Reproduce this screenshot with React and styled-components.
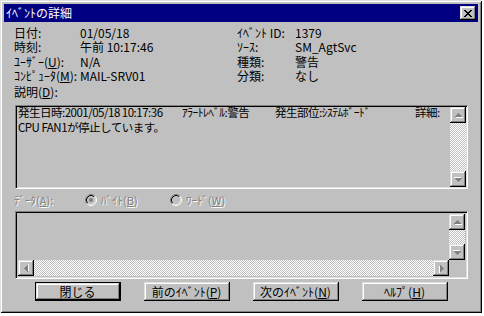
import React from 'react';
import styled, { createGlobalStyle, css } from 'styled-components';

const GlobalStyle = createGlobalStyle`
  body {
    margin: 0;
    background: #ffffff;
    font-family: "Noto Sans CJK JP", "Liberation Sans", sans-serif;
    font-size: 12px;
    color: #000;
  }
`;

const raised = css`
  background: #c0c0c0;
  box-shadow: inset -1px -1px #000, inset 1px 1px #dfdfdf, inset -2px -2px #808080,
    inset 2px 2px #fff;
`;

const sunken = css`
  box-sizing: border-box;
  border: 1px solid;
  border-color: #808080 #fff #fff #808080;
  box-shadow: inset 1px 1px #000, inset -1px -1px #dfdfdf;
`;

const Window = styled.div`
  box-sizing: border-box;
  width: 482px;
  padding: 4px;
  background: #c0c0c0;
  box-shadow: inset 1px 1px #dfdfdf, inset -1px -1px #000, inset 2px 2px #fff,
    inset -2px -2px #808080;
`;

const TitleBar = styled.div`
  height: 18px;
  background: #000080;
  display: flex;
  align-items: center;
  justify-content: space-between;
  padding: 0 2px;
`;

const TitleText = styled.span`
  color: #fff;
  font-size: 12px;
  line-height: 18px;
  white-space: nowrap;
`;

const CloseButton = styled.div`
  ${raised};
  width: 16px;
  height: 14px;
  display: flex;
  align-items: center;
  justify-content: center;
`;

const Body = styled.div`
  padding: 4px 10px 8px 10px;
  display: flex;
  flex-direction: column;
`;

const InfoGrid = styled.div`
  display: grid;
  grid-template-columns: 66px 157px 58px 1fr;
  line-height: 14.3px;
  white-space: nowrap;
`;

const U = styled.span`
  text-decoration: underline;
`;

const SectionLabel = styled.div`
  margin-top: 1px;
  line-height: 16px;
`;

const DescBox = styled.div`
  ${sunken};
  margin: 5px 0 0 1px;
  height: 84px;
  display: flex;
  padding: 1px;
  background: #c0c0c0;
`;

const DescText = styled.div`
  flex: 1;
  margin-top: -2px;
  padding-left: 1px;
  font-size: 11.5px;
  letter-spacing: -0.5px;
  line-height: 14.6px;
  overflow: hidden;
`;

const Line = styled.div`
  display: flex;
  white-space: nowrap;
`;

const Seg = styled.span`
  flex: none;
  width: ${({ $w }) => ($w ? `${$w}px` : 'auto')};
`;

const VScroll = styled.div`
  width: 16px;
  display: flex;
  flex-direction: column;
`;

const HScroll = styled.div`
  display: flex;
  height: 16px;
`;

const ArrowButton = styled.div`
  ${raised};
  flex: none;
  width: 16px;
  height: 16px;
  display: flex;
  align-items: center;
  justify-content: center;
`;

const Track = styled.div`
  flex: 1;
  background-color: #c0c0c0;
  background-image: conic-gradient(#fff 25%, #c0c0c0 0 50%, #fff 0 75%, #c0c0c0 0);
  background-size: 2px 2px;
`;

const DataRow = styled.div`
  margin-top: 4px;
  height: 14px;
  display: flex;
  align-items: center;
  white-space: nowrap;
  font-size: 11px;
  color: #808080;
  text-shadow: 1px 1px 0 #fff;
`;

const DataLabel = styled.span`
  width: 71px;
`;

const Radio = styled.label`
  display: inline-flex;
  align-items: center;
  gap: 4px;
  width: ${({ $w }) => $w}px;
`;

const DataBox = styled.div`
  ${sunken};
  margin: 4px 0 0 1px;
  height: 68px;
  padding: 2px;
  display: grid;
  grid-template-columns: 1fr 16px;
  grid-template-rows: 1fr 16px;
  background: #c0c0c0;
`;

const Corner = styled.div`
  background: #c0c0c0;
`;

const ButtonRow = styled.div`
  margin-top: 3px;
  display: flex;
  justify-content: center;
  gap: 23px;
`;

const Button = styled.div`
  ${raised};
  box-sizing: border-box;
  width: 86px;
  height: 19px;
  display: flex;
  align-items: center;
  justify-content: center;
  font-size: 12px;
  white-space: nowrap;
  ${({ $default }) =>
    $default &&
    css`
      border: 1px solid #000;
    `}
`;

const CloseGlyph = () => (
  <svg width="8" height="7" viewBox="0 0 8 7" shapeRendering="crispEdges">
    <path
      fill="#000"
      d="M0 0h2v1H0zM6 0h2v1H6zM1 1h2v1H1zM5 1h2v1H5zM2 2h4v1H2zM3 3h2v1H3zM2 4h4v1H2zM1 5h2v1H1zM5 5h2v1H5zM0 6h2v1H0zM6 6h2v1H6z"
    />
  </svg>
);

const rotations = { up: 0, right: 90, down: 180, left: 270 };

const Arrow = ({ dir }) => (
  <svg
    width="9"
    height="9"
    viewBox="0 0 9 9"
    shapeRendering="crispEdges"
    style={{ transform: `rotate(${rotations[dir]}deg)` }}
  >
    <path fill="#fff" d="M5 3h1v1H5zM4 4h3v1H4zM3 5h5v1H3zM2 6h7v1H2z" />
    <path fill="#808080" d="M4 2h1v1H4zM3 3h3v1H3zM2 4h5v1H2zM1 5h7v1H1z" />
  </svg>
);

const RadioIcon = ({ checked }) => (
  <svg width="12" height="12" viewBox="0 0 12 12">
    <circle cx="6" cy="6" r="4.2" fill="#c0c0c0" />
    <path d="M9.89 2.11A5.5 5.5 0 0 0 2.11 9.89" stroke="#808080" fill="none" />
    <path d="M9.89 2.11A5.5 5.5 0 0 1 2.11 9.89" stroke="#fff" fill="none" />
    <path d="M9.18 2.82A4.5 4.5 0 0 0 2.82 9.18" stroke="#000" fill="none" />
    <path d="M9.18 2.82A4.5 4.5 0 0 1 2.82 9.18" stroke="#dfdfdf" fill="none" />
    {checked && <circle cx="6" cy="6" r="2" fill="#808080" />}
  </svg>
);

const VerticalBar = () => (
  <VScroll>
    <ArrowButton>
      <Arrow dir="up" />
    </ArrowButton>
    <Track />
    <ArrowButton>
      <Arrow dir="down" />
    </ArrowButton>
  </VScroll>
);

const info = [
  ['日付:', '01/05/18', 'ｲﾍﾞﾝﾄ ID:', '1379'],
  ['時刻:', '午前 10:17:46', 'ｿｰｽ:', 'SM_AgtSvc'],
  [
    <>
      ﾕｰｻﾞｰ(<U>U</U>):
    </>,
    'N/A',
    '種類:',
    '警告',
  ],
  [
    <>
      ｺﾝﾋﾟｭｰﾀ(<U>M</U>):
    </>,
    'MAIL-SRV01',
    '分類:',
    'なし',
  ],
];

const App = () => (
  <>
    <GlobalStyle />
    <Window>
      <TitleBar>
        <TitleText>ｲﾍﾞﾝﾄの詳細</TitleText>
        <CloseButton>
          <CloseGlyph />
        </CloseButton>
      </TitleBar>
      <Body>
        <InfoGrid>
          {info.map((row, i) => row.map((cell, j) => <span key={`${i}-${j}`}>{cell}</span>))}
        </InfoGrid>
        <SectionLabel>
          説明(<U>D</U>):
        </SectionLabel>
        <DescBox>
          <DescText>
            <Line>
              <Seg $w={164}>発生日時:2001/05/18 10:17:36</Seg>
              <Seg $w={93}>ｱﾗｰﾄﾚﾍﾞﾙ:警告</Seg>
              <Seg $w={140}>発生部位:ｼｽﾃﾑﾎﾞｰﾄﾞ</Seg>
              <Seg>詳細:</Seg>
            </Line>
            <Line>CPU FAN1が停止しています。</Line>
          </DescText>
          <VerticalBar />
        </DescBox>
        <DataRow>
          <DataLabel>
            ﾃﾞｰﾀ(<U>A</U>):
          </DataLabel>
          <Radio $w={85}>
            <RadioIcon checked />
            <span>
              ﾊﾞｲﾄ(<U>B</U>)
            </span>
          </Radio>
          <Radio $w={85}>
            <RadioIcon />
            <span>
              ﾜｰﾄﾞ(<U>W</U>)
            </span>
          </Radio>
        </DataRow>
        <DataBox>
          <div />
          <VerticalBar />
          <HScroll>
            <ArrowButton>
              <Arrow dir="left" />
            </ArrowButton>
            <Track />
            <ArrowButton>
              <Arrow dir="right" />
            </ArrowButton>
          </HScroll>
          <Corner />
        </DataBox>
        <ButtonRow>
          <Button $default>閉じる</Button>
          <Button>
            前のｲﾍﾞﾝﾄ(<U>P</U>)
          </Button>
          <Button>
            次のｲﾍﾞﾝﾄ(<U>N</U>)
          </Button>
          <Button>
            ﾍﾙﾌﾟ(<U>H</U>)
          </Button>
        </ButtonRow>
      </Body>
    </Window>
  </>
);

export default App;
